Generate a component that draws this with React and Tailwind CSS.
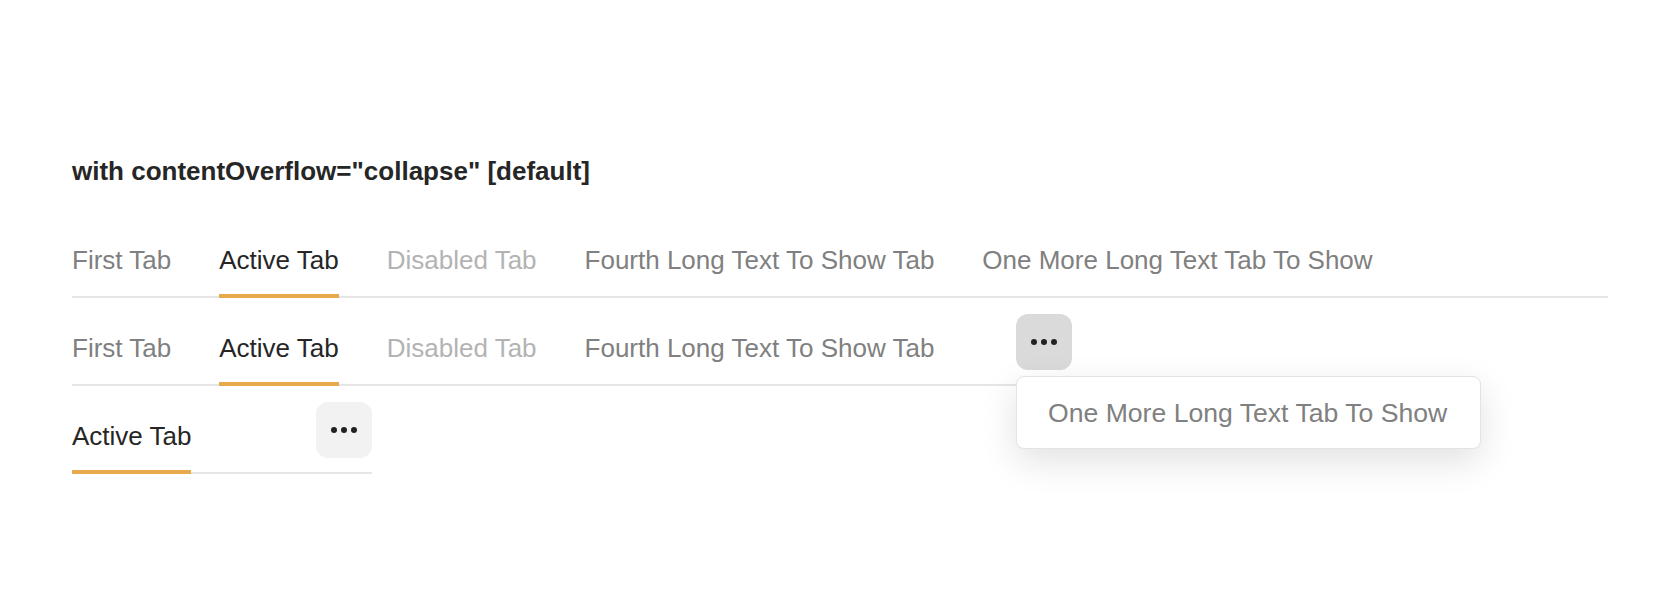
import { useState } from "react";

const TABS = [
  { label: "First Tab" },
  { label: "Active Tab", active: true },
  { label: "Disabled Tab", disabled: true },
  { label: "Fourth Long Text To Show Tab" },
  { label: "One More Long Text Tab To Show" },
];

function Tab({ label, active, disabled }) {
  let color = "text-[#808080] border-transparent";
  if (active) color = "text-[#262626] border-[#e8a84c]";
  if (disabled) color = "text-[#b3b3b3] border-transparent";
  return (
    <div
      className={`shrink-0 whitespace-nowrap pt-[20px] pb-[20px] -mb-[2px] border-b-4 text-[26px] leading-[28px] ${color}`}
    >
      {label}
    </div>
  );
}

function MoreButton({ open, hidden }) {
  return (
    <div className="relative ml-auto">
      <button
        className={`w-[56px] h-[56px] rounded-xl flex items-center justify-center gap-[4px] ${
          open ? "bg-[#dadada]" : "bg-[#f2f2f2]"
        }`}
      >
        <span className="w-[6px] h-[6px] rounded-full bg-[#222]" />
        <span className="w-[6px] h-[6px] rounded-full bg-[#222]" />
        <span className="w-[6px] h-[6px] rounded-full bg-[#222]" />
      </button>
      {open && (
        <div className="absolute left-0 top-[62px] z-10 w-[465px] h-[73px] flex items-center pl-[31px] bg-white border border-[#e3e3e3] rounded-lg shadow-[0_12px_36px_rgba(0,0,0,0.12)]">
          {hidden.map((t) => (
            <span key={t.label} className="whitespace-nowrap text-[26.6px] leading-[28px] text-[#808080]">
              {t.label}
            </span>
          ))}
        </div>
      )}
    </div>
  );
}

function TabBar({ tabs, hidden, width, open }) {
  return (
    <div className={`flex items-start gap-[48px] border-b-2 border-[#e6e6e6] ${width}`}>
      {tabs.map((t) => (
        <Tab key={t.label} {...t} />
      ))}
      {hidden && <MoreButton open={open} hidden={hidden} />}
    </div>
  );
}

export default function App() {
  const [tabs] = useState(TABS);

  return (
    <div
      className="w-[1680px] h-[594px] bg-white px-[72px] pt-[156px] overflow-hidden"
      style={{ fontFamily: '"Liberation Sans", Arial, sans-serif' }}
    >
      <h2 className="text-[26px] leading-[30px] font-bold text-[#262626]">
        with contentOverflow="collapse" [default]
      </h2>

      <div className="mt-[40px] flex flex-col gap-4">
        <TabBar tabs={tabs} width="w-full" />
        <TabBar tabs={tabs.slice(0, 4)} hidden={tabs.slice(4)} width="w-[1000px]" open />
        <TabBar tabs={[tabs[1]]} hidden={tabs.filter((t) => !t.active)} width="w-[300px]" />
      </div>
    </div>
  );
}
